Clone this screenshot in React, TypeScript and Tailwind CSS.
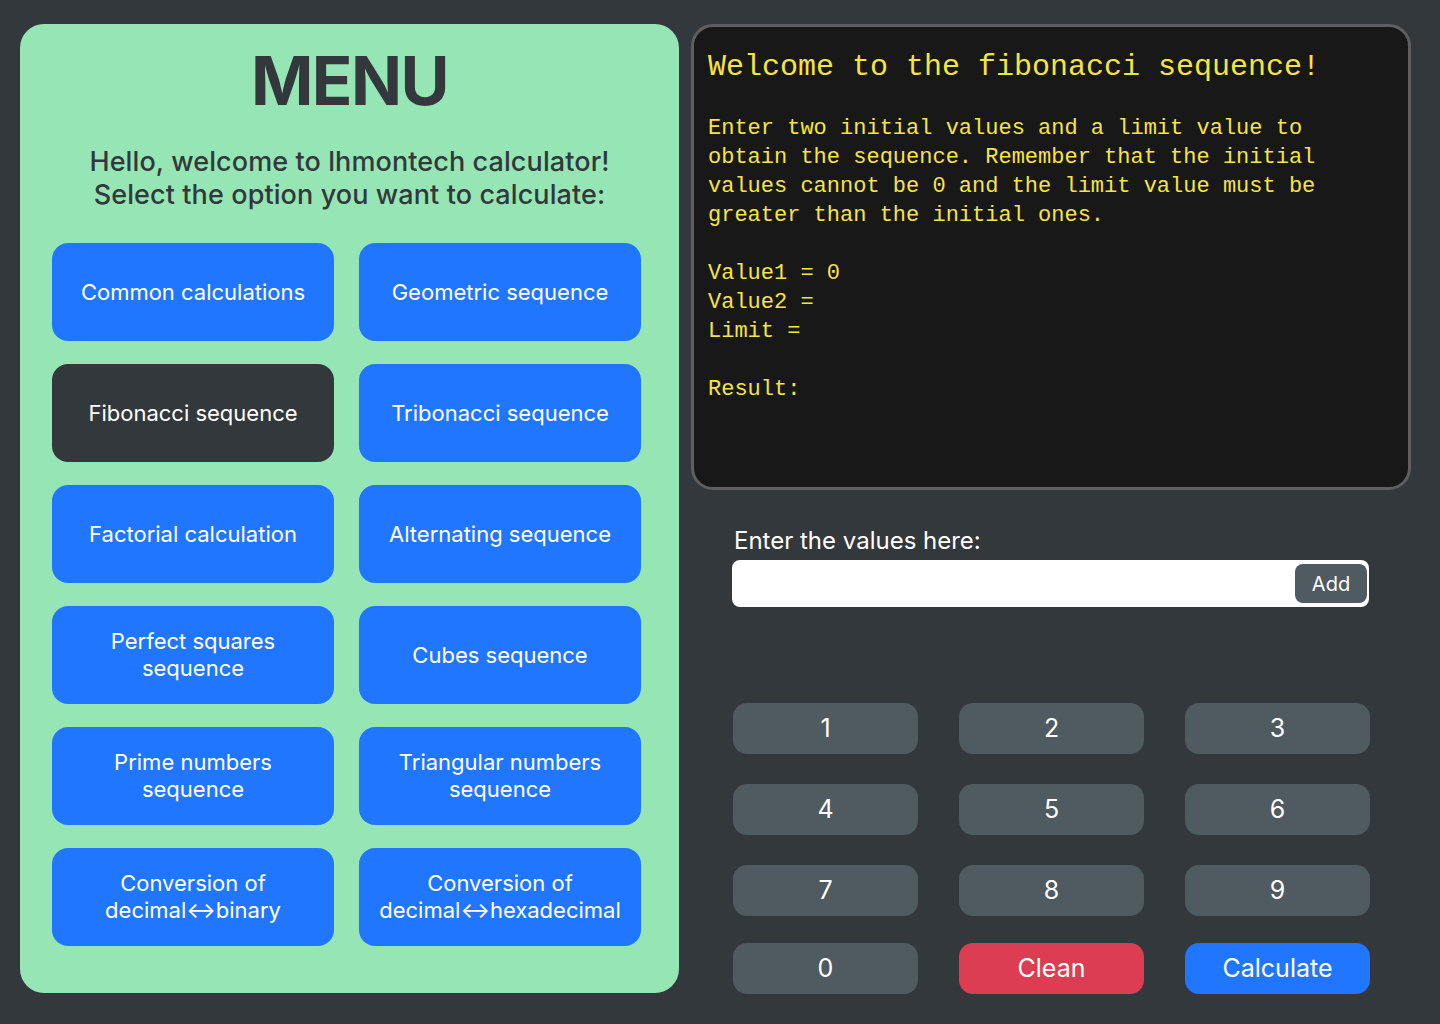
import React from 'react';

const options = [
  { label: 'Common calculations' },
  { label: 'Geometric sequence' },
  { label: 'Fibonacci sequence', active: true },
  { label: 'Tribonacci sequence' },
  { label: 'Factorial calculation' },
  { label: 'Alternating sequence' },
  { label: 'Perfect squares sequence', lines: ['Perfect squares', 'sequence'] },
  { label: 'Cubes sequence' },
  { label: 'Prime numbers sequence', lines: ['Prime numbers', 'sequence'] },
  { label: 'Triangular numbers sequence', lines: ['Triangular numbers', 'sequence'] },
  { label: 'Conversion binary', lines: ['Conversion of', 'decimal↔binary'] },
  { label: 'Conversion hex', lines: ['Conversion of', 'decimal↔hexadecimal'] },
];

const keys = [
  ['1', '2', '3'],
  ['4', '5', '6'],
  ['7', '8', '9'],
];

const App: React.FC = () => {
  return (
    <div
      className="w-[1440px] h-[1024px] bg-[#32383c] flex items-start pl-[20px] pt-[24px] gap-[12px]"
      style={{ fontFamily: 'Inter, "Noto Sans", sans-serif' }}
    >
      {/* Menu */}
      <div className="w-[659px] h-[969px] bg-[#95e6b4] rounded-[24px] flex flex-col items-center">
        <h1 className="text-[67px] leading-none font-bold text-[#32383c] mt-[23px] tracking-[-1.5px]">MENU</h1>
        <p className="text-[27px] leading-[33px] font-medium text-[#32383c] text-center mt-[31px] tracking-[0.1px]">
          Hello, welcome to lhmontech calculator!
          <br />
          Select the option you want to calculate:
        </p>
        <div className="grid grid-cols-[282px_282px] gap-x-[25px] gap-y-[23px] mt-[32px] self-start ml-[32px]">
          {options.map((opt) => (
            <button
              key={opt.label}
              className={`h-[98px] rounded-[16px] text-white text-[22px] leading-[27px] flex flex-col items-center justify-center ${
                opt.active ? 'bg-[#32383c]' : 'bg-[#2176ff]'
              }`}
            >
              {opt.lines ? opt.lines.map((l) => <span key={l}>{l}</span>) : opt.label}
            </button>
          ))}
        </div>
      </div>

      {/* Right side */}
      <div className="w-[720px] flex flex-col">
        <div
          className="h-[466px] bg-[#181818] border-[3px] border-[#5d5f61] rounded-[22px] px-[14px] pt-[22px] text-[#f5e543]"
          style={{ fontFamily: '"Liberation Mono", "DejaVu Sans Mono", monospace' }}
        >
          <h2 className="text-[30px] leading-[36px]">Welcome to the fibonacci sequence!</h2>
          <div className="text-[22px] leading-[29px] mt-[29px]">
            <p>Enter two initial values and a limit value to</p>
            <p>obtain the sequence. Remember that the initial</p>
            <p>values cannot be 0 and the limit value must be</p>
            <p>greater than the initial ones.</p>
            <p className="mt-[29px]">Value1 = 0</p>
            <p>Value2 =</p>
            <p>Limit =</p>
            <p className="mt-[29px]">Result:</p>
          </div>
        </div>

        <div className="pl-[42px] mt-[37px]">
          <label className="block text-white text-[24px] leading-[28px] ml-[1px]">Enter the values here:</label>
          <div className="mt-[5px] h-[47px] bg-white rounded-[8px] flex items-center justify-end pr-[2px] w-[637px] -ml-[1px]">
            <button className="h-[39px] w-[72px] bg-[#4f5a61] rounded-[8px] text-white text-[20px]">Add</button>
          </div>

          <div className="mt-[96px] w-[637px] flex flex-col">
            {keys.map((row, i) => (
              <div key={i} className="grid grid-cols-3 gap-x-[41px] mb-[30px]">
                {row.map((k) => (
                  <button key={k} className="h-[51px] rounded-[14px] bg-[#4f5a61] text-white text-[25px]">
                    {k}
                  </button>
                ))}
              </div>
            ))}
            <div className="grid grid-cols-3 gap-x-[41px] -mt-[3px]">
              <button className="h-[51px] rounded-[14px] bg-[#4f5a61] text-white text-[25px]">0</button>
              <button className="h-[51px] rounded-[14px] bg-[#dc3d52] text-white text-[25px]">Clean</button>
              <button className="h-[51px] rounded-[14px] bg-[#2176ff] text-white text-[25px]">Calculate</button>
            </div>
          </div>
        </div>
      </div>
    </div>
  );
};

export default App;
